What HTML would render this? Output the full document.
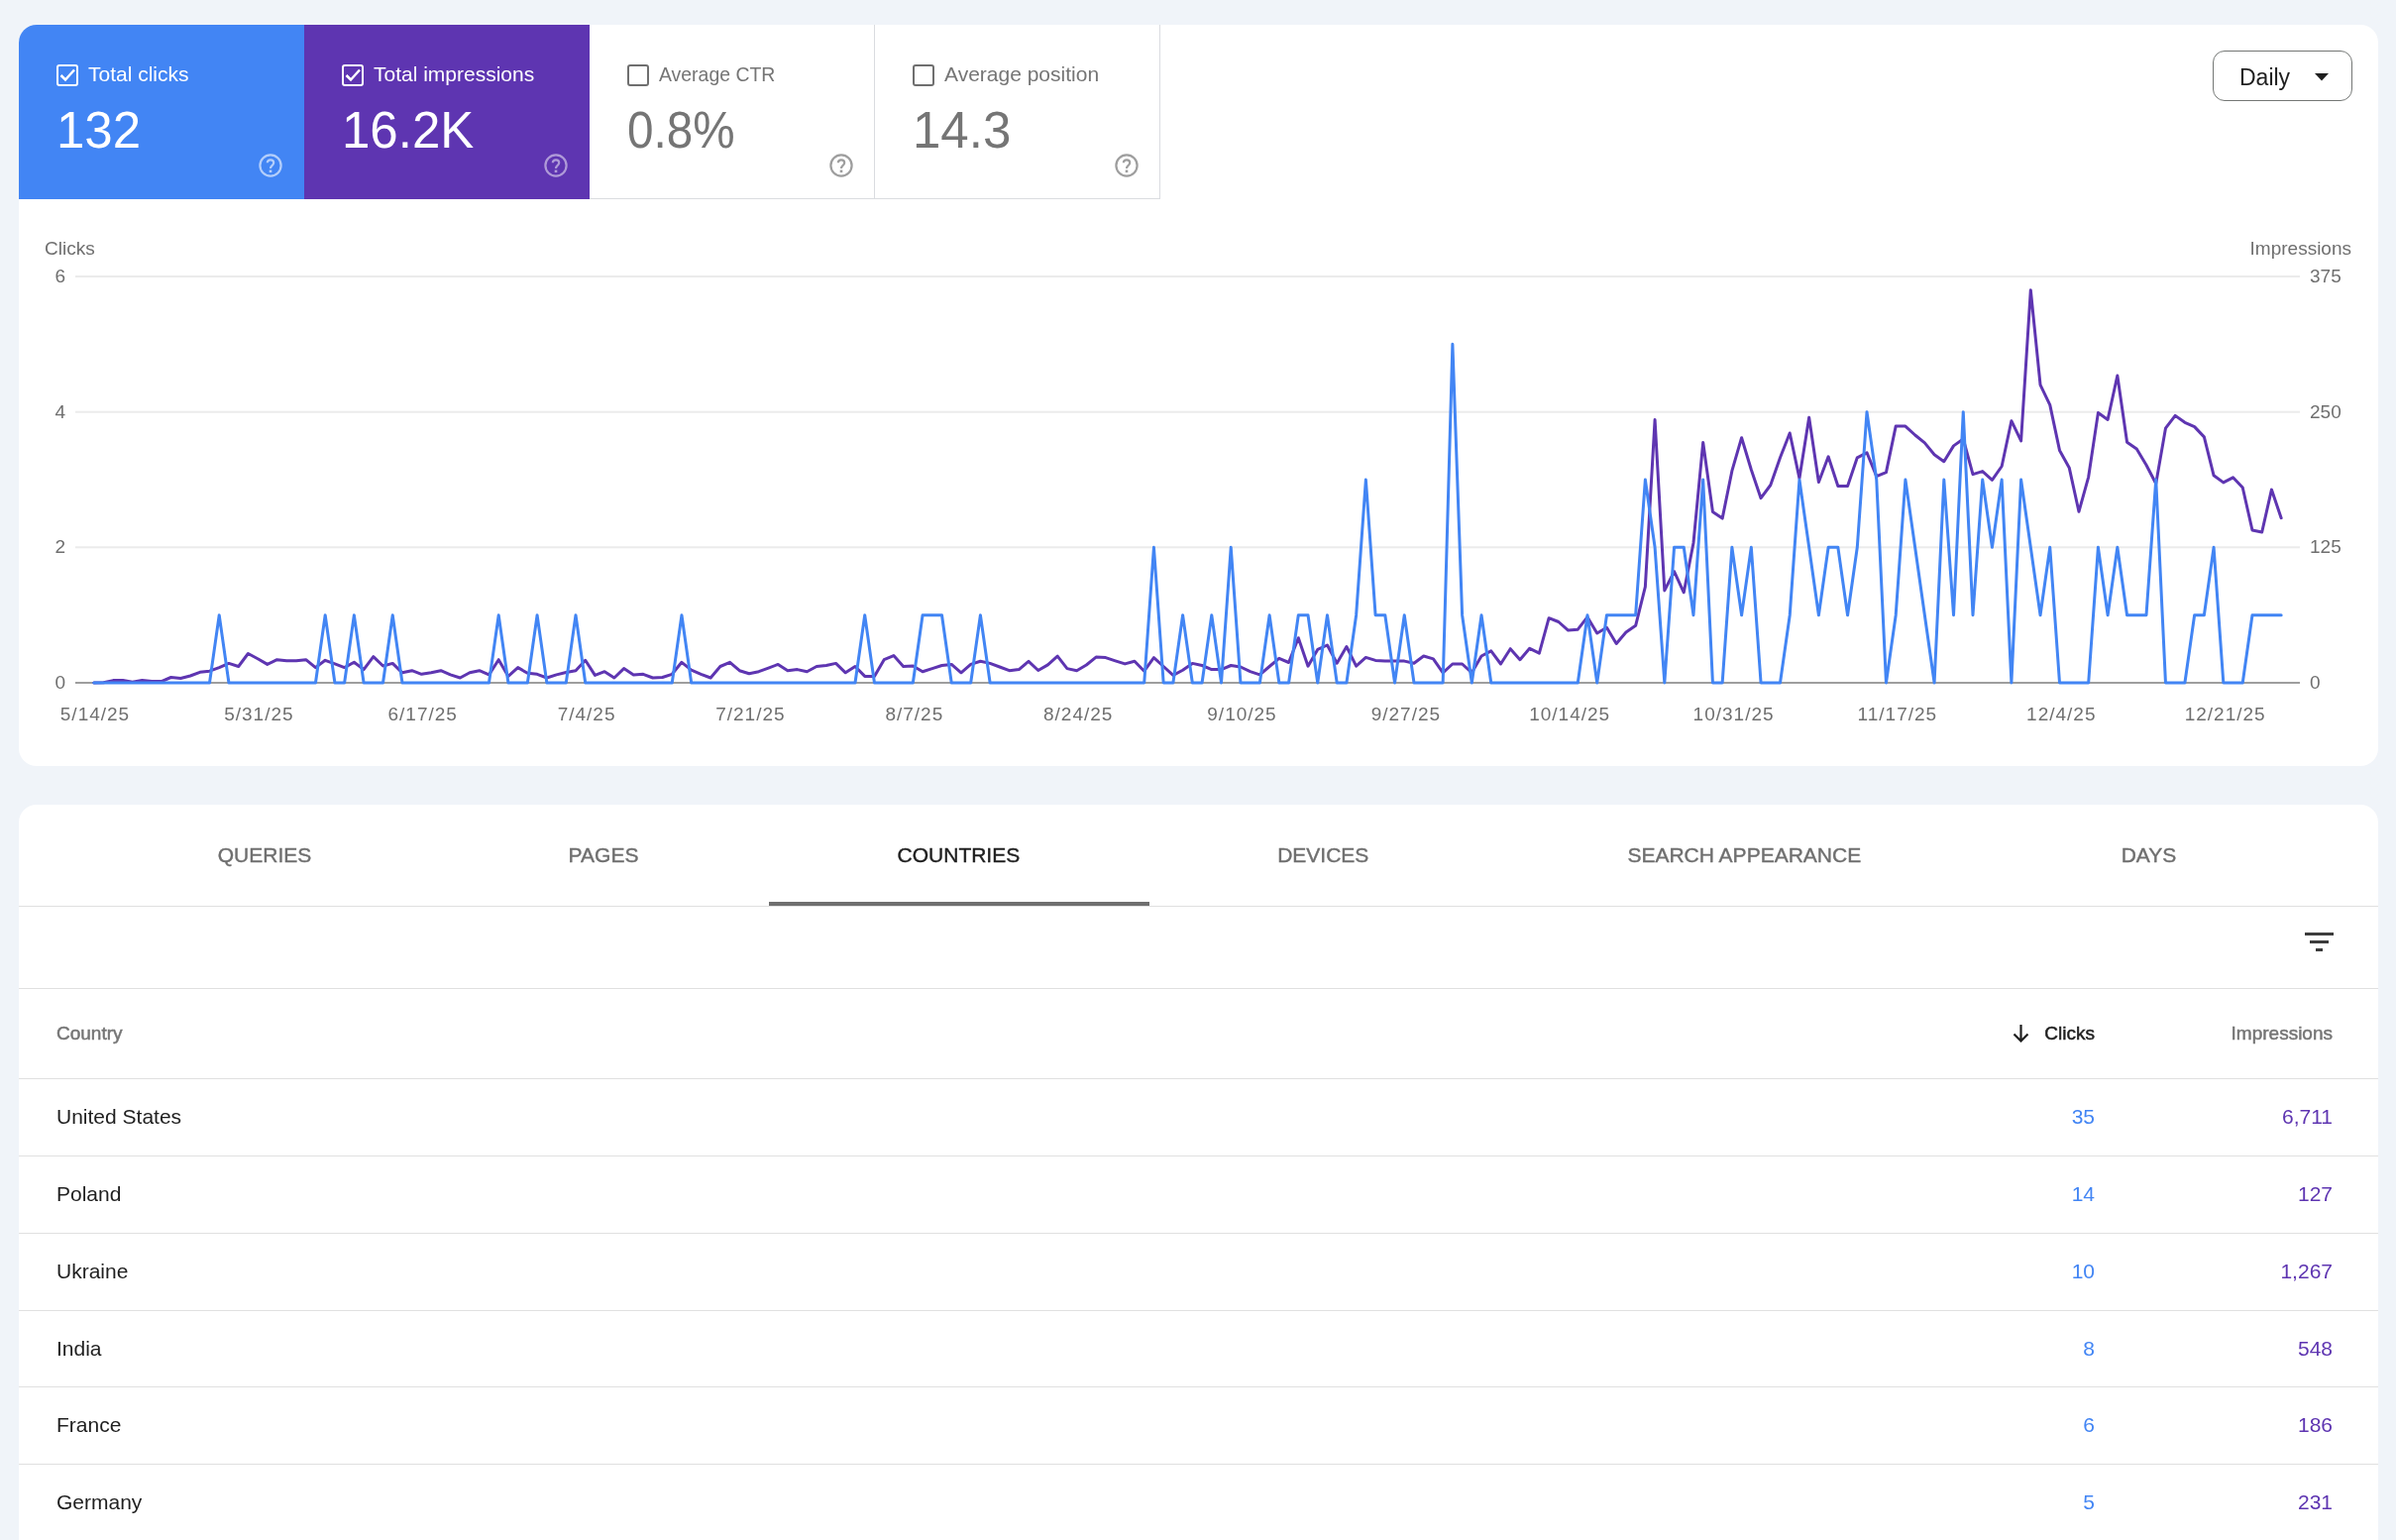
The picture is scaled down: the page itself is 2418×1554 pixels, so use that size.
<!DOCTYPE html>
<html><head><meta charset="utf-8">
<style>
*{box-sizing:border-box;margin:0;padding:0}
html,body{width:2418px;height:1554px;overflow:hidden;background:#f0f4f9;font-family:"Liberation Sans",sans-serif;-webkit-font-smoothing:antialiased}
#card1,#card2{will-change:transform}
.abs{position:absolute}
#card1{position:absolute;left:19px;top:25px;width:2381px;height:748px;background:#fff;border-radius:18px;overflow:hidden}
#card2{position:absolute;left:19px;top:812px;width:2381px;height:760px;background:#fff;border-radius:18px 18px 0 0;overflow:hidden}
.metric{position:absolute;top:0;width:288px;height:176px}
.metric .lbl{position:absolute;left:70px;top:38px;font-size:21px;white-space:nowrap}
.metric .val{position:absolute;left:38px;top:77px;font-size:51px;white-space:nowrap}
.cb{position:absolute;left:38px;top:40px;width:22px;height:22px;border:2.5px solid #fff;border-radius:3px}
.help{position:absolute;left:242px;top:130px;width:24px;height:24px}
.tab{position:absolute;top:0;width:600px;height:102px;font-size:21px;color:#6f6f6f;line-height:102px;text-align:center;-webkit-text-stroke:0.4px currentColor}
.row{position:absolute;left:0;width:2381px;height:78px;border-top:1.5px solid #e0e0e0}
.row .c{position:absolute;left:38px;top:0;line-height:76px;font-size:21px;color:#1f1f1f}
.row .k{position:absolute;right:286px;top:0;line-height:76px;font-size:21px;color:#4285f4}
.row .i{position:absolute;right:46px;top:0;line-height:76px;font-size:21px;color:#5e35b1}
.yl{position:absolute;font-size:19px;color:#6f6f6f}
.hd{position:absolute;top:186px;height:90px;line-height:90px;font-size:19px;color:#757575;-webkit-text-stroke:0.5px currentColor}
.xl{position:absolute;top:685px;font-size:19px;color:#6f6f6f;width:120px;text-align:center;letter-spacing:1px;text-indent:1px}
</style></head><body>
<div id="card1">
  <div class="metric" style="left:0;background:#4285f4;color:#fff">
    <div class="cb"><svg width="22" height="22" viewBox="0 0 22 22" style="position:absolute;left:-2.5px;top:-2.5px"><path d="M4.5 11 L9 15.5 L18 5.5" fill="none" stroke="#fff" stroke-width="2.5"/></svg></div>
    <div class="lbl">Total clicks</div>
    <div class="val">132</div>
    <svg class="help" viewBox="0 0 24 24"><circle cx="12" cy="12" r="10.6" fill="none" stroke="rgba(255,255,255,0.6)" stroke-width="2.2"/><path d="M8.8 9.3 Q9 6.3 12 6.3 Q15.2 6.3 15.2 9.2 Q15.2 10.8 13.3 12.3 Q12 13.4 12 15" fill="none" stroke="rgba(255,255,255,0.6)" stroke-width="2.2"/><rect x="10.7" y="16.5" width="2.6" height="2.6" fill="rgba(255,255,255,0.6)"/></svg>
  </div>
  <div class="metric" style="left:288px;background:#5e35b1;color:#fff">
    <div class="cb"><svg width="22" height="22" viewBox="0 0 22 22" style="position:absolute;left:-2.5px;top:-2.5px"><path d="M4.5 11 L9 15.5 L18 5.5" fill="none" stroke="#fff" stroke-width="2.5"/></svg></div>
    <div class="lbl">Total impressions</div>
    <div class="val">16.2K</div>
    <svg class="help" viewBox="0 0 24 24"><circle cx="12" cy="12" r="10.6" fill="none" stroke="rgba(255,255,255,0.5)" stroke-width="2.2"/><path d="M8.8 9.3 Q9 6.3 12 6.3 Q15.2 6.3 15.2 9.2 Q15.2 10.8 13.3 12.3 Q12 13.4 12 15" fill="none" stroke="rgba(255,255,255,0.5)" stroke-width="2.2"/><rect x="10.7" y="16.5" width="2.6" height="2.6" fill="rgba(255,255,255,0.5)"/></svg>
  </div>
  <div class="metric" style="left:576px;color:#757575;border-right:1.5px solid #dadce0;border-bottom:1.5px solid #dadce0">
    <div class="cb" style="border-color:#6f6f6f"></div>
    <div class="lbl" style="transform:scaleX(0.925);transform-origin:0 0">Average CTR</div>
    <div class="val" style="transform:scaleX(0.935);transform-origin:0 0">0.8%</div>
    <svg class="help" viewBox="0 0 24 24"><circle cx="12" cy="12" r="10.6" fill="none" stroke="#9e9e9e" stroke-width="2.2"/><path d="M8.8 9.3 Q9 6.3 12 6.3 Q15.2 6.3 15.2 9.2 Q15.2 10.8 13.3 12.3 Q12 13.4 12 15" fill="none" stroke="#9e9e9e" stroke-width="2.2"/><rect x="10.7" y="16.5" width="2.6" height="2.6" fill="#9e9e9e"/></svg>
  </div>
  <div class="metric" style="left:864px;color:#757575;border-right:1.5px solid #dadce0;border-bottom:1.5px solid #dadce0">
    <div class="cb" style="border-color:#6f6f6f"></div>
    <div class="lbl">Average position</div>
    <div class="val">14.3</div>
    <svg class="help" viewBox="0 0 24 24"><circle cx="12" cy="12" r="10.6" fill="none" stroke="#9e9e9e" stroke-width="2.2"/><path d="M8.8 9.3 Q9 6.3 12 6.3 Q15.2 6.3 15.2 9.2 Q15.2 10.8 13.3 12.3 Q12 13.4 12 15" fill="none" stroke="#9e9e9e" stroke-width="2.2"/><rect x="10.7" y="16.5" width="2.6" height="2.6" fill="#9e9e9e"/></svg>
  </div>
  <div class="abs" style="left:2214px;top:26px;width:141px;height:51px;border:1.3px solid #747775;border-radius:12px;">
    <div class="abs" style="left:26px;top:13px;font-size:23px;color:#1f1f1f">Daily</div>
    <svg class="abs" style="left:102px;top:22px" width="14" height="8" viewBox="0 0 14 8"><path d="M0 0 L14 0 L7 7.5 Z" fill="#1f1f1f"/></svg>
  </div>
  <!-- CHART -->
  <div class="yl" style="left:26px;top:215px">Clicks</div>
  <div class="yl" style="right:27px;top:215px">Impressions</div>
<div class="xl" style="left:16.5px">5/14/25</div>
<div class="xl" style="left:181.9px">5/31/25</div>
<div class="xl" style="left:347.2px">6/17/25</div>
<div class="xl" style="left:512.6px">7/4/25</div>
<div class="xl" style="left:677.9px">7/21/25</div>
<div class="xl" style="left:843.3px">8/7/25</div>
<div class="xl" style="left:1008.7px">8/24/25</div>
<div class="xl" style="left:1174.0px">9/10/25</div>
<div class="xl" style="left:1339.4px">9/27/25</div>
<div class="xl" style="left:1504.7px">10/14/25</div>
<div class="xl" style="left:1670.1px">10/31/25</div>
<div class="xl" style="left:1835.4px">11/17/25</div>
<div class="xl" style="left:2000.8px">12/4/25</div>
<div class="xl" style="left:2166.2px">12/21/25</div>
<div class="yl" style="right:2334px;top:243.0px;text-align:right">6</div>
<div class="yl" style="left:2312px;top:243.0px">375</div>
<div class="yl" style="right:2334px;top:379.7px;text-align:right">4</div>
<div class="yl" style="left:2312px;top:379.7px">250</div>
<div class="yl" style="right:2334px;top:516.3px;text-align:right">2</div>
<div class="yl" style="left:2312px;top:516.3px">125</div>
<div class="yl" style="right:2334px;top:653.0px;text-align:right">0</div>
<div class="yl" style="left:2312px;top:653.0px">0</div>
  <svg class="abs" style="left:0;top:0" width="2381" height="748" id="chart">
<rect x="57" y="253.00" width="2245" height="2" fill="#ebebeb"/>
<rect x="57" y="389.67" width="2245" height="2" fill="#ebebeb"/>
<rect x="57" y="526.33" width="2245" height="2" fill="#ebebeb"/>
<rect x="57" y="663.00" width="2245" height="2" fill="#9e9e9e"/>
<polyline points="75.80,664.00 85.52,663.70 95.25,661.60 104.97,661.60 114.70,663.20 124.42,661.60 134.14,662.60 143.87,662.60 153.59,658.50 163.32,659.50 173.04,657.00 182.76,653.30 192.49,652.20 202.21,648.60 211.94,644.40 221.66,647.50 231.38,634.50 241.11,639.70 250.83,645.40 260.56,640.70 270.28,641.80 280.00,641.80 289.73,640.70 299.45,648.60 309.18,641.30 318.90,644.90 328.62,648.60 338.35,643.30 348.07,650.60 357.80,637.60 367.52,647.00 377.24,644.40 386.97,653.80 396.69,651.70 406.42,655.30 416.14,653.80 425.86,651.70 435.59,655.90 445.31,659.00 455.04,653.80 464.76,651.70 474.48,655.90 484.21,640.70 493.93,657.40 503.66,648.60 513.38,654.30 523.10,655.30 532.83,659.00 542.55,655.90 552.28,653.50 562.00,651.70 571.72,641.30 581.45,656.40 591.17,652.70 600.90,659.00 610.62,649.60 620.34,655.90 630.07,655.30 639.79,659.00 649.52,658.50 659.24,655.30 668.96,643.30 678.69,651.20 688.41,655.30 698.14,659.00 707.86,647.50 717.58,643.30 727.31,651.70 737.03,654.80 746.76,652.70 756.48,649.10 766.20,645.40 775.93,651.70 785.65,650.60 795.38,652.70 805.10,647.50 814.82,646.50 824.55,644.40 834.27,653.80 844.00,647.50 853.72,657.40 863.44,657.40 873.17,640.70 882.89,636.60 892.62,647.50 902.34,647.00 912.06,652.70 921.79,649.60 931.51,646.50 941.24,645.40 950.96,653.80 960.68,645.40 970.41,642.30 980.13,644.40 989.86,648.00 999.58,651.70 1009.30,650.60 1019.03,642.30 1028.75,651.50 1038.48,645.90 1048.20,637.10 1057.92,649.60 1067.65,651.70 1077.37,646.00 1087.10,638.10 1096.82,638.60 1106.54,641.80 1116.27,644.90 1125.99,642.30 1135.72,652.20 1145.44,638.60 1155.16,647.50 1164.89,656.40 1174.61,651.20 1184.34,644.40 1194.06,646.50 1203.78,650.60 1213.51,650.60 1223.23,646.50 1232.96,648.00 1242.68,652.70 1252.40,655.90 1262.13,647.50 1271.85,639.30 1281.58,643.50 1291.30,618.70 1301.02,647.20 1310.75,630.40 1320.47,626.00 1330.20,644.30 1339.92,627.50 1349.64,647.20 1359.37,638.40 1369.09,641.40 1378.82,642.10 1388.54,642.10 1398.26,642.10 1407.99,644.30 1417.71,637.00 1427.44,639.90 1437.16,653.80 1446.88,645.00 1456.61,645.00 1466.33,653.80 1476.06,637.00 1485.78,631.90 1495.50,645.00 1505.23,629.70 1514.95,640.70 1524.68,629.30 1534.40,634.10 1544.12,598.70 1553.85,602.50 1563.57,611.10 1573.30,610.20 1583.02,597.70 1592.74,614.00 1602.47,608.30 1612.19,624.50 1621.92,613.00 1631.64,606.30 1641.36,567.10 1651.09,398.50 1660.81,570.90 1670.54,551.70 1680.26,572.80 1689.98,523.00 1699.71,421.50 1709.43,491.40 1719.16,498.10 1728.88,450.20 1738.60,416.70 1748.33,449.00 1758.05,477.70 1767.78,464.50 1777.50,436.80 1787.22,412.00 1796.95,457.60 1806.67,396.20 1816.40,461.50 1826.12,435.80 1835.84,465.50 1845.57,465.50 1855.29,436.80 1865.02,431.80 1874.74,455.60 1884.46,451.60 1894.19,405.10 1903.91,405.10 1913.64,414.00 1923.36,421.90 1933.08,433.80 1942.81,440.70 1952.53,424.90 1962.26,418.00 1971.98,453.60 1981.70,450.60 1991.43,459.30 2001.15,445.50 2010.88,399.70 2020.60,419.90 2030.32,267.70 2040.05,363.40 2049.77,383.60 2059.50,429.40 2069.22,446.90 2078.94,491.30 2088.67,456.30 2098.39,391.60 2108.12,398.40 2117.84,354.00 2127.56,421.30 2137.29,428.00 2147.01,444.20 2156.74,463.00 2166.46,407.20 2176.18,394.40 2185.91,401.30 2195.63,405.60 2205.36,415.90 2215.08,454.80 2224.80,461.90 2234.53,456.80 2244.25,467.00 2253.98,510.00 2263.70,512.00 2273.42,469.10 2283.15,497.70" fill="none" stroke="#5e35b1" stroke-width="3" stroke-linejoin="round" stroke-linecap="round"/>
<polyline points="75.80,664.00 85.52,664.00 95.25,664.00 104.97,664.00 114.70,664.00 124.42,664.00 134.14,664.00 143.87,664.00 153.59,664.00 163.32,664.00 173.04,664.00 182.76,664.00 192.49,664.00 202.21,595.67 211.94,664.00 221.66,664.00 231.38,664.00 241.11,664.00 250.83,664.00 260.56,664.00 270.28,664.00 280.00,664.00 289.73,664.00 299.45,664.00 309.18,595.67 318.90,664.00 328.62,664.00 338.35,595.67 348.07,664.00 357.80,664.00 367.52,664.00 377.24,595.67 386.97,664.00 396.69,664.00 406.42,664.00 416.14,664.00 425.86,664.00 435.59,664.00 445.31,664.00 455.04,664.00 464.76,664.00 474.48,664.00 484.21,595.67 493.93,664.00 503.66,664.00 513.38,664.00 523.10,595.67 532.83,664.00 542.55,664.00 552.28,664.00 562.00,595.67 571.72,664.00 581.45,664.00 591.17,664.00 600.90,664.00 610.62,664.00 620.34,664.00 630.07,664.00 639.79,664.00 649.52,664.00 659.24,664.00 668.96,595.67 678.69,664.00 688.41,664.00 698.14,664.00 707.86,664.00 717.58,664.00 727.31,664.00 737.03,664.00 746.76,664.00 756.48,664.00 766.20,664.00 775.93,664.00 785.65,664.00 795.38,664.00 805.10,664.00 814.82,664.00 824.55,664.00 834.27,664.00 844.00,664.00 853.72,595.67 863.44,664.00 873.17,664.00 882.89,664.00 892.62,664.00 902.34,664.00 912.06,595.67 921.79,595.67 931.51,595.67 941.24,664.00 950.96,664.00 960.68,664.00 970.41,595.67 980.13,664.00 989.86,664.00 999.58,664.00 1009.30,664.00 1019.03,664.00 1028.75,664.00 1038.48,664.00 1048.20,664.00 1057.92,664.00 1067.65,664.00 1077.37,664.00 1087.10,664.00 1096.82,664.00 1106.54,664.00 1116.27,664.00 1125.99,664.00 1135.72,664.00 1145.44,527.33 1155.16,664.00 1164.89,664.00 1174.61,595.67 1184.34,664.00 1194.06,664.00 1203.78,595.67 1213.51,664.00 1223.23,527.33 1232.96,664.00 1242.68,664.00 1252.40,664.00 1262.13,595.67 1271.85,664.00 1281.58,664.00 1291.30,595.67 1301.02,595.67 1310.75,664.00 1320.47,595.67 1330.20,664.00 1339.92,664.00 1349.64,595.67 1359.37,459.00 1369.09,595.67 1378.82,595.67 1388.54,664.00 1398.26,595.67 1407.99,664.00 1417.71,664.00 1427.44,664.00 1437.16,664.00 1446.88,322.33 1456.61,595.67 1466.33,664.00 1476.06,595.67 1485.78,664.00 1495.50,664.00 1505.23,664.00 1514.95,664.00 1524.68,664.00 1534.40,664.00 1544.12,664.00 1553.85,664.00 1563.57,664.00 1573.30,664.00 1583.02,595.67 1592.74,664.00 1602.47,595.67 1612.19,595.67 1621.92,595.67 1631.64,595.67 1641.36,459.00 1651.09,527.33 1660.81,664.00 1670.54,527.33 1680.26,527.33 1689.98,595.67 1699.71,459.00 1709.43,664.00 1719.16,664.00 1728.88,527.33 1738.60,595.67 1748.33,527.33 1758.05,664.00 1767.78,664.00 1777.50,664.00 1787.22,595.67 1796.95,459.00 1806.67,527.33 1816.40,595.67 1826.12,527.33 1835.84,527.33 1845.57,595.67 1855.29,527.33 1865.02,390.67 1874.74,459.00 1884.46,664.00 1894.19,595.67 1903.91,459.00 1913.64,527.33 1923.36,595.67 1933.08,664.00 1942.81,459.00 1952.53,595.67 1962.26,390.67 1971.98,595.67 1981.70,459.00 1991.43,527.33 2001.15,459.00 2010.88,664.00 2020.60,459.00 2030.32,527.33 2040.05,595.67 2049.77,527.33 2059.50,664.00 2069.22,664.00 2078.94,664.00 2088.67,664.00 2098.39,527.33 2108.12,595.67 2117.84,527.33 2127.56,595.67 2137.29,595.67 2147.01,595.67 2156.74,459.00 2166.46,664.00 2176.18,664.00 2185.91,664.00 2195.63,595.67 2205.36,595.67 2215.08,527.33 2224.80,664.00 2234.53,664.00 2244.25,664.00 2253.98,595.67 2263.70,595.67 2273.42,595.67 2283.15,595.67" fill="none" stroke="#4285f4" stroke-width="3" stroke-linejoin="round" stroke-linecap="round"/>
</svg>
</div>
<div id="card2">
<div class="tab" style="left:-52.0px;">QUERIES</div>
<div class="tab" style="left:290.0px;">PAGES</div>
<div class="tab" style="left:648.4px;color:#1f1f1f;">COUNTRIES</div>
<div class="tab" style="left:1016.3px;">DEVICES</div>
<div class="tab" style="left:1441.3px;">SEARCH APPEARANCE</div>
<div class="tab" style="left:1849.5px;">DAYS</div>
<div class="abs" style="left:0;top:184.5px;width:2381px;height:1.5px;background:#e0e0e0"></div>
<svg class="abs" style="left:2307px;top:129px" width="29" height="19" viewBox="0 0 29 19"><rect x="0" y="0" width="29" height="3" fill="#3c3c3c"/><rect x="5" y="8" width="19" height="3" fill="#3c3c3c"/><rect x="11" y="16" width="7" height="3" fill="#3c3c3c"/></svg>
<div class="hd" style="left:38px">Country</div>
<svg class="abs" style="left:2012px;top:222px" width="17" height="18" viewBox="0 0 17 18"><path d="M8.5 0 V16 M1.5 9.5 L8.5 16.5 L15.5 9.5" fill="none" stroke="#1f1f1f" stroke-width="2.2"/></svg>
<div class="hd" style="right:286px;color:#1f1f1f">Clicks</div>
<div class="hd" style="right:46px">Impressions</div>
<div class="row" style="top:276.0px"><div class="c">United States</div><div class="k">35</div><div class="i">6,711</div></div>
<div class="row" style="top:353.9px"><div class="c">Poland</div><div class="k">14</div><div class="i">127</div></div>
<div class="row" style="top:431.7px"><div class="c">Ukraine</div><div class="k">10</div><div class="i">1,267</div></div>
<div class="row" style="top:509.5px"><div class="c">India</div><div class="k">8</div><div class="i">548</div></div>
<div class="row" style="top:587.4px"><div class="c">France</div><div class="k">6</div><div class="i">186</div></div>
<div class="row" style="top:665.2px"><div class="c">Germany</div><div class="k">5</div><div class="i">231</div></div>
  <div class="abs" style="left:757px;top:98px;width:384px;height:4px;background:#6f6f6f"></div>
  <div class="abs" style="left:0;top:101.5px;width:2381px;height:1.5px;background:#e0e0e0"></div>
</div>
</body></html>
